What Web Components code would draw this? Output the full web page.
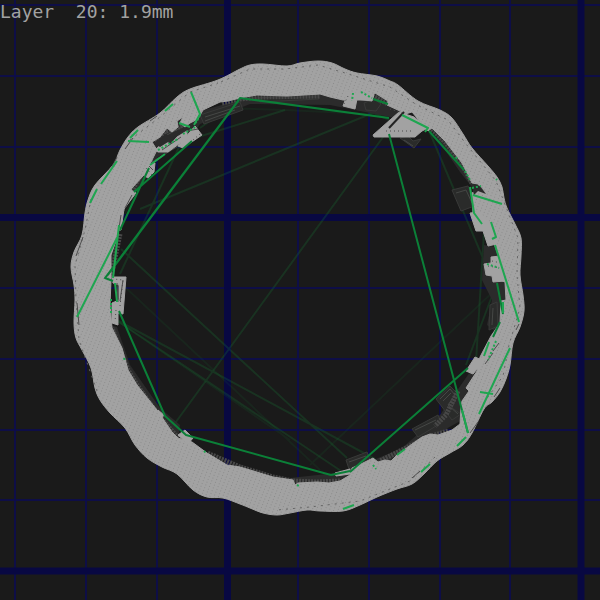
<!DOCTYPE html>
<html lang="en">
<head>
<meta charset="utf-8">
<meta name="viewport" content="width=device-width, initial-scale=1">
<title>Layer preview</title>
<style>
body { margin: 0; background: #1a1a1a; color: #a2a2a2; }
</style>
</head>
<body>
<layer-viewer>
  <build-grid slot="scene"></build-grid>
  <tool-paths slot="scene"></tool-paths>
  <layer-label slot="label">Layer  20: 1.9mm</layer-label>
</layer-viewer>

<template id="viewer-template">
  <style>
    :host { display: grid; overflow: hidden; }
    ::slotted(*) { grid-area: 1 / 1; }
  </style>
  <slot name="scene"></slot>
  <slot name="label"></slot>
</template>

<template id="label-template">
  <style>
    :host { display: block; align-self: start; font: 18px/24px "DejaVu Sans Mono", monospace; }
    span { white-space: pre; }
  </style>
  <span><slot></slot></span>
</template>

<template id="grid-template">
  <style>
    :host { display: block; }
    svg { display: block; width: 100%; height: auto; }
    .minor { stroke: #0b0b52; stroke-width: 2; }
    .major { stroke: #080842; stroke-width: 7; }
  </style>
  <svg viewBox="0 0 600 600" aria-hidden="true">
    <path class="minor" stroke-opacity=".8" d="M15 0V600M86 0V600M157 0V600M298 0V600M369 0V600M440 0V600M510 0V600M0 5H600M0 76H600M0 147H600M0 288H600M0 359H600M0 430H600M0 500H600"/>
    <path class="major" d="M227.5 0V600M581 0V600M0 217.500H600M0 571H600"/>
  </svg>
</template>

<template id="paths-template">
  <style>
    :host { display: block; }
    svg { display: block; width: 100%; height: auto; }
    path { fill: none; stroke-linejoin: round; }
    .wall { fill: url(#infill); fill-rule: evenodd; stroke: #a2a2a2; stroke-width: 1; }
    .part { fill: #a2a2a2; stroke: #a2a2a2; stroke-width: 1; }
    .teeth { stroke: #484848; stroke-width: 5; stroke-dasharray: 2 1; }
    .under { fill: #2b2b2b; }
    .ghost { fill: #2a2b2a; stroke: #383938; stroke-width: 1; }
    .ghost-line { stroke: #454745; stroke-width: 1; }
    .seam { stroke: #666; stroke-width: 1; stroke-dasharray: 2 5; }
    .gap { stroke: #4c4c4c; stroke-width: 1; }
    .slit { stroke: #242424; stroke-width: 2; }
    .dot { stroke: #4c4c4c; stroke-width: 1; stroke-dasharray: 1 3; }
    .old { stroke: #178a3c; stroke-width: 2; stroke-opacity: .22; }
    .older { stroke: #178a3c; stroke-width: 2; stroke-opacity: .1; }
    .travel { stroke: #0b8038; stroke-width: 2; }
    .near { stroke: #1ea650; stroke-width: 2; }
    .spark { stroke: #1ea650; stroke-width: 2; stroke-dasharray: 2 2; }
  </style>
  <svg viewBox="0 0 600 600" role="img" aria-label="Sliced layer with tool paths">
    <defs>
      <pattern id="infill" width="4" height="3" patternUnits="userSpaceOnUse" patternTransform="rotate(22)">
        <rect width="4" height="3" fill="#a2a2a2"/>
        <rect width="1" height="1" fill="#8c8c8c"/>
      </pattern>
    </defs>

    <!-- faded travel moves from earlier layers -->
    <path class="old" d="M386 133L173 426M113 318L375 459M113 318L347 475M375 112L140 209M285 110L198 137M121 249L347 458M180 145L120 274M484 232L476 362M498 280L466 365M430 133L488 270M372 112L400 125M232 105L200 128M410 448L352 474L285 481"/>
    <path class="older" d="M125 287L320 470M495 290L310 465M113 318L290 440M440 140L478 195M390 115L285 110L220 108M150 170L120 222"/>

    <!-- layers showing through at the inner edge -->
    <path class="under" d="M197 112L250 97L320 93L375 93L400 108L395 118L330 105L250 104L200 124L190 140L158 157L140 188L125 205L138 175L150 140L180 115ZM430 128L447 135L475 180L490 197L480 197L460 172ZM484 245L501 248L508 300L497 333L487 325L492 300L482 280ZM470 372L478 375L462 420L430 438L410 460L380 464L352 475L336 486L292 486L290 478L345 472L402 448L440 415ZM110 325L117 327L130 365L160 408L180 425L178 439L158 421L125 370ZM108 242L118 235L114 285L108 277Z"/>
    <path class="ghost" d="M452 190L468 186L477 205L461 211ZM400 138L408 136L413 141L421 139L414 148ZM346 460L367 452L370 460L349 469ZM436 399L450 386L458 394L452 408L461 414L452 420ZM412 429L438 415L441 423L418 437ZM490 305L497 302L498 326L489 330ZM258 98L318 94L319 99L260 102ZM200 115L240 102L243 110L204 124ZM364 103L374 99L381 104L376 111L366 110Z"/>
    <path class="ghost-line" d="M440 399L450 389L455 395L448 405L458 414M443 401L451 393M349 462L366 456M456 193L466 190L472 203M404 140L413 146M415 430L436 420M493 308L492 325M205 117L240 106M205 121L235 110M163 137L184 126M155 160L192 138"/>
    <path class="teeth" d="M222 103L240 99L260 97L320 96M375 97L388 104M432 129L445 142L462 164L472 183M458 391L446 415L435 426M448 431L425 438L410 446L380 461M340 481L317 482L293 481L273 477L240 467L207 453M178 438L160 417L137 385L128 370L112 328M111 277L120 234M122 210L143 170L154 160M154 140L166 131L177 128L198 116"/>

    <!-- printed wall: the outer contour is listed as points and drawn as a smooth curve -->
    <path class="wall" data-outer="240 69 250 65 263 64 287 66 300 63 318 61 332 63 345 69 357 73 377 76 390 81 398 85 418 101 440 110 452 118 463 134 472 148 488 166 497 177 502 187 504 198 507 208 515 224 521 238 521 256 520 275 523 295 524 311 520 327 513 343 510 365 506 379 500 392 492 402 484 409 472 433 463 445 450 453 437 461 424 474 412 484 397 489 377 497 360 505 343 511 320 511 307 510 290 513 277 515 263 513 250 508 240 504 223 498 207 497 193 490 177 474 162 467 147 458 135 445 125 428 110 413 100 400 95 388 91 368 82 350 76 338 74 323 75 300 74 285 71 267 74 252 82 235 85 213 88 200 95 185 113 165 120 150 128 137 138 127 160 113 177 97 190 89 218 80" data-inner="M240 98L228 101L220 102L203 110L198 119L190 123L185 127L180 123L183 117L177 121L178 127L172 132L167 128L160 137L152 142L157 150L151 162L143 176L132 188L126 200L120 212L118 235L111 255L111 280L110 305L112 328L122 348L128 370L137 385L157 410L172 432L178 438L192 442L207 453L227 465L240 467L250 470L273 477L293 480L295 485L298 483L317 482L329 483L340 481L350 475L352 468L363 463L373 458L378 462L385 460L391 461L397 455L412 444L422 437L430 434L438 435L452 430L460 424L461 407L462 401L469 391L466 388L477 371L480 357L491 336L500 323L501 301L506 300L505 282L493 277L499 257L490 233L473 214L472 193L482 187L484 192L478 184L472 183L462 163L445 141L432 128L428 131L412 112L402 115L400 111L387 105L388 101L375 93L370 100L343 100L330 97L320 94L287 96L257 95Z"/>

    <!-- perimeter blobs along the inner edge -->
    <path class="part" d="M399 112L373 135L374 137L415 137L422 131L428 128L414 117ZM345 91L358 94L355 109L343 106L346 98ZM356 92L374 95L372 101L356 99ZM470 213L479 212L496 228L497 244L488 246L483 231L476 231ZM491 257L500 256L505 281L493 282L492 276L486 275L484 264L491 263ZM493 334L498 340L488 360L482 357ZM475 357L484 361L473 374L466 371ZM112 277L126 277L123 314L118 313L118 325L112 323L112 303L119 300L119 285L113 283ZM178 435L185 430L193 438L188 444ZM158 410L164 415L161 419ZM178 146L195 126L202 135L183 148ZM155 150L167 139L169 146L178 136L187 130L187 138L168 152L158 152ZM144 171L147 164L155 163L154 172L148 178L143 175ZM131 190L136 193L124 209L121 230L118 230L120 210ZM335 473L350 469L350 474L336 476Z"/>
    <path class="slit" d="M404 112L389 128"/>
    <path class="gap" d="M125 208L132 195M119 228L121 215M162 150L181 137M187 131L198 129M149 166L153 170M499 343L493 351M493 353L485 364M500 388L494 397M478 422L470 433M117 283L118 302M123 280L120 301"/>
    <path class="under" d="M154 143L166 134L172 138L182 130L191 128L181 134L160 147ZM472 187L480 186L486 194L478 191L474 195Z"/>
    <path class="dot" d="M386 131L414 131M187 145L200 134M116 310L115 322M120 306L123 280L113 279M488 266L500 268M492 261L501 263M348 96L344 104M390 109L402 113M146 168L152 175"/>

    <!-- small gaps between outer and inner perimeters -->
    <path class="seam" d="M221 82L250 69L285 69L318 65L345 73L390 87L417 105L448 120L466 144L496 181L518 238L517 275L520 308L509 345L503 376L483 404M435 457L410 481L360 501L310 507L277 510M97 391L79 340L76 300L75 265L85 230L91 199M130 140L160 117L190 92L218 83"/>
    <path class="gap" d="M125 149L133 138M76 256L83 237M77 303L79 325M420 471L412 478M516 330L519 324M157 116L150 121M117 157L112 167"/>

    <!-- travel moves of this layer -->
    <path class="travel" d="M389 118L240 98L105 278L113 281M239 100L107 276M389 134L468 433M429 131L464 170M350 472L468 368M331 475L186 435L165 416L119 311M134 192L192 141M149 168L120 230M373 99L388 104M331 475L350 471M497 283L503 314M500 322L493 337"/>
    <path class="near" d="M77 317L118 236M119 225L113 278M115 283L117 302M128 141L149 142M101 184L117 161M90 203L97 189M130 138L138 130M165 111L173 104M191 92L200 114L194 125M179 123L190 127M150 165L165 154M402 115L428 128L425 132M473 195L502 204M470 187L474 213L482 224M491 222L496 237L492 239M495 245L519 322M510 348L479 414M480 392L493 394M462 410L468 433M466 437L457 446M430 464L421 472M343 509L354 505M397 455L405 449M489 342L484 356M503 302L503 313"/>
    <path class="spark" d="M353 93L352 101M361 92L372 98M487 264L499 268M465 171L470 180M472 188L481 186M111 299L111 313M158 150L178 139M183 134L197 126M200 115L196 123M496 341L488 360M373 465L376 469M496 179L497 180M456 157L457 159M124 358L125 361M297 485L299 486M204 451L206 453"/>
  </svg>
</template>

<script>
function defineFromTemplate(name, templateId, setup) {
  customElements.define(name, class extends HTMLElement {
    constructor() {
      super();
      const template = document.getElementById(templateId);
      const root = this.attachShadow({ mode: "open" });
      root.append(template.content.cloneNode(true));
      if (setup) setup(root);
    }
  });
}

// Closed Catmull-Rom curve through a flat list of coordinates.
function smoothLoop(list) {
  const n = list.length / 2;
  const at = i => { const k = ((i + n) % n) * 2; return [list[k], list[k + 1]]; };
  let d = "M" + at(0).join(" ");
  for (let i = 0; i < n; i++) {
    const [a, b, c, e] = [at(i - 1), at(i), at(i + 1), at(i + 2)];
    const first = b.map((v, k) => v + (c[k] - a[k]) / 6);
    const second = c.map((v, k) => v - (e[k] - b[k]) / 6);
    d += "C" + [...first, ...second, ...c].join(" ");
  }
  return d + "Z";
}

defineFromTemplate("build-grid", "grid-template");
defineFromTemplate("tool-paths", "paths-template", root => {
  const wall = root.querySelector(".wall");
  const points = wall.dataset.outer.split(" ").map(Number);
  wall.setAttribute("d", smoothLoop(points) + wall.dataset.inner);
});
defineFromTemplate("layer-label", "label-template");
defineFromTemplate("layer-viewer", "viewer-template");
</script>
</body>
</html>
